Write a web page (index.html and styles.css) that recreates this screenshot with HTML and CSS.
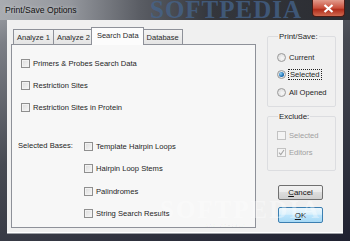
FILE: index.html
```html
<!DOCTYPE html>
<html lang="en">
<head>
  <meta charset="UTF-8" />
  <title>Print/Save Options</title>
  <link rel="stylesheet" href="styles.css">
</head>
<body>
  <div class="window">
    <!-- Barra del titolo -->
    <div class="titlebar">
      <span class="title">Print/Save Options</span>
      <span class="brand">SOFTPEDIA</span>
      <span class="close">
        <svg width="11" height="9" viewBox="0 0 11 9"><path d="M1.5 1 L9.5 8 M9.5 1 L1.5 8" stroke="#fff" stroke-width="2.2" /></svg>
      </span>
    </div>

    <div class="client">
      <!-- Schede -->
      <div class="tabs">
        <div class="tab-strip">
          <span class="tab">Analyze 1</span>
          <span class="tab">Analyze 2</span>
          <span class="tab active">Search Data</span>
          <span class="tab">Database</span>
        </div>
        <div class="panel">
          <label class="row"><span class="cb"></span>Primers &amp; Probes Search Data</label>
          <label class="row"><span class="cb"></span>Restriction Sites</label>
          <label class="row"><span class="cb"></span>Restriction Sites in Protein</label>

          <div class="bases">
            <span class="bases-label">Selected Bases:</span>
            <div class="bases-list">
              <label class="row"><span class="cb"></span>Template Hairpin Loops</label>
              <label class="row"><span class="cb"></span>Hairpin Loop Stems</label>
              <label class="row"><span class="cb"></span>Palindromes</label>
              <label class="row"><span class="cb"></span>String Search Results</label>
            </div>
          </div>
        </div>
      </div>

      <!-- Colonna destra -->
      <div class="side">
        <fieldset class="group print">
          <legend>Print/Save:</legend>
          <label class="row radio-row"><span class="rb"></span>Current</label>
          <label class="row radio-row"><span class="rb on"></span><span class="focus">Selected</span></label>
          <label class="row radio-row"><span class="rb"></span>All Opened</label>
        </fieldset>

        <fieldset class="group exclude">
          <legend>Exclude:</legend>
          <label class="row off"><span class="cb dis"></span>Selected</label>
          <label class="row off">
            <span class="cb dis">
              <svg width="7" height="7" viewBox="0 0 7 7"><path d="M1 3.6 L2.8 5.6 L6 1" stroke="#a6a6a6" stroke-width="1.1" fill="none" /></svg>
            </span>Editors
          </label>
        </fieldset>

        <button class="btn"><u>C</u>ancel</button>
        <button class="btn default"><u>O</u>K</button>
      </div>
    </div>

    <!-- Filigrana -->
    <span class="mark">SOFTPEDIA</span>
    <span class="mark-url">www.softpedia.com</span>
  </div>
</body>
</html>
```

FILE: styles.css
```css
body {
  margin: 0;
  font-family: "Liberation Sans", Arial, sans-serif;
  font-size: 7.6px;
  color: #1e1e1e;
}

.window {
  position: relative;
  width: 350px;
  height: 241px;
  display: flex;
  flex-direction: column;
  overflow: hidden;
  background: linear-gradient(160deg, #a3a6ab 0%, #7c7f86 12%, #474a52 45%, #1f2130 100%);
}

.titlebar {
  position: relative;
  height: 20px;
  display: flex;
  align-items: center;
  background: linear-gradient(90deg, #a9acb1 0%, #94979d 20%, #5a5d64 40%, #34363c 60%, #2b2d32 100%);
}

.title {
  margin-left: 5px;
  font-size: 8.6px;
  color: #111;
  text-shadow: 0 0 4px rgba(255, 255, 255, 0.6);
}

.brand {
  position: absolute;
  left: 150px;
  top: -4px;
  font-family: "Liberation Serif", serif;
  font-weight: bold;
  font-size: 25px;
  letter-spacing: 1px;
  color: #45648c;
  opacity: 0.75;
}

.close {
  position: absolute;
  right: 5px;
  top: 0;
  width: 33px;
  height: 17px;
  display: flex;
  align-items: center;
  justify-content: center;
  border: 1px solid #4a1b16;
  border-top: none;
  border-radius: 0 0 4px 4px;
  box-sizing: border-box;
  background: linear-gradient(#e29b8c, #c9503d 50%, #b12e1c 60%, #d0694f);
}

.client {
  flex: 1;
  margin: 0 7px 8px 7px;
  display: flex;
  padding: 8px 0 0 4px;
  background: #f0f0f0;
  border-bottom: 1px solid #fff;
  box-shadow: 0 1px 0 #9da0a6;
}

/* Schede */
.tabs {
  width: 245px;
  display: flex;
  flex-direction: column;
}

.tab-strip {
  height: 16px;
  display: flex;
  align-items: flex-end;
  padding-left: 2px;
}

.tab {
  height: 15px;
  padding: 0 3px;
  display: flex;
  align-items: center;
  box-sizing: border-box;
  border: 1px solid #8e9199;
  border-bottom: none;
  margin-right: -1px;
  background: linear-gradient(#f4f4f4, #e4e4e4);
  font-size: 7.5px;
  color: #2a2a2a;
}

.tab.active {
  position: relative;
  height: 18px;
  margin: 0 -1px 0 -2px;
  padding: 0 4px 2px 5px;
  background: #fcfcfc;
  z-index: 1;
  margin-bottom: -1px;
}

.panel {
  height: 184px;
  box-sizing: border-box;
  border: 1px solid #8e9199;
  background: #f7f7f7;
  padding: 11px 0 0 9px;
  display: flex;
  flex-direction: column;
  gap: 8px;
}

.row {
  height: 14px;
  display: flex;
  align-items: center;
  gap: 3px;
  white-space: nowrap;
}

.cb {
  width: 9px;
  height: 9px;
  box-sizing: border-box;
  border: 1px solid #8f8f8f;
  background: linear-gradient(135deg, #dcdcdc, #f7f7f7);
  box-shadow: inset 0 0 0 1px #f2f2f2;
  display: flex;
  align-items: center;
  justify-content: center;
}

.bases {
  display: flex;
  margin: 17px 0 0 -3px;
}

.bases-label {
  width: 66px;
  height: 14px;
  line-height: 14px;
}

.bases-list {
  display: flex;
  flex-direction: column;
  gap: 8px;
}

.bases-list .row + .row {
  margin-top: 0.5px;
}

/* Colonna destra */
.side {
  margin-left: 11px;
  width: 69px;
  display: flex;
  flex-direction: column;
}

.group {
  margin: 0;
  padding: 0 0 0 9px;
  min-width: 0;
  border: 1px solid #dcdde0;
  border-radius: 2px;
}

.group legend {
  padding: 0 1px;
  margin-left: 1px;
  font-size: 7.9px;
  line-height: 9px;
}

.print {
  margin-top: 4px;
  height: 75px;
  box-sizing: border-box;
  padding-top: 9px;
  display: flex;
  flex-direction: column;
  gap: 3.5px;
}

.rb {
  width: 9px;
  height: 9px;
  box-sizing: border-box;
  border-radius: 50%;
  border: 1px solid #9a9a9a;
  background: radial-gradient(circle at 60% 60%, #f8f8f8, #d6d6d6);
  display: flex;
  align-items: center;
  justify-content: center;
}

.rb.on::after {
  content: "";
  width: 5px;
  height: 5px;
  border-radius: 50%;
  background: radial-gradient(circle at 35% 35%, #8fd0f5, #1c6fb3 60%, #0d4a86);
}

.focus {
  outline: 1px dotted #222;
  padding: 0 1px;
}

.exclude {
  margin-top: 5px;
  height: 59px;
  box-sizing: border-box;
  padding-top: 7px;
  display: flex;
  flex-direction: column;
  gap: 3px;
}

.row.off {
  color: #a0a0a0;
}

.cb.dis {
  border-color: #c2c2c2;
  background: #f4f4f4;
  box-shadow: none;
}

.btn {
  margin: 14px 0 0 11px;
  width: 45px;
  height: 15px;
  padding: 0;
  border: 1px solid #707070;
  border-radius: 2px;
  background: linear-gradient(#f2f2f2 0%, #ebebeb 45%, #dddddd 50%, #cfcfcf 100%);
  font-family: "Liberation Sans", Arial, sans-serif;
  font-size: 7.9px;
  color: #111;
}

.btn.default {
  margin-top: 7px;
  height: 16px;
  border-color: #3c7fb1;
  background: linear-gradient(#eaf6fd 0%, #d9f0fc 45%, #bee6fd 50%, #a7d9f5 100%);
}

/* Filigrana */
.mark {
  position: absolute;
  left: 160px;
  top: 196px;
  font-family: "Liberation Serif", serif;
  font-weight: bold;
  font-size: 25px;
  letter-spacing: 2px;
  color: rgba(255, 255, 255, 0.35);
  pointer-events: none;
}

.mark-url {
  position: absolute;
  left: 205px;
  top: 222px;
  font-size: 5px;
  color: rgba(0, 0, 0, 0.06);
  pointer-events: none;
}
```
